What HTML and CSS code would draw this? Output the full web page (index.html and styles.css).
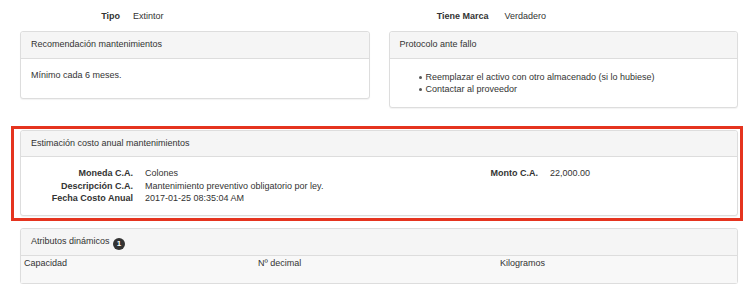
FILE: index.html
```html
<!DOCTYPE html>
<html>
<head>
    <meta charset="utf-8">
    <title>Activo - detalle</title>
    <link rel="stylesheet" href="styles.css">
</head>
<body>
<div class="page">

    <div class="columns">
        <div class="col">
            <dl class="pair">
                <dt>Tipo</dt>
                <dd>Extintor</dd>
            </dl>
            <div class="panel">
                <div class="panel-heading">Recomendación mantenimientos</div>
                <div class="panel-body">
                    <p class="text">Mínimo cada 6 meses.</p>
                </div>
            </div>
        </div>
        <div class="col">
            <dl class="pair wide">
                <dt>Tiene Marca</dt>
                <dd>Verdadero</dd>
            </dl>
            <div class="panel">
                <div class="panel-heading">Protocolo ante fallo</div>
                <div class="panel-body">
                    <ul class="bullets">
                        <li>Reemplazar el activo con otro almacenado (si lo hubiese)</li>
                        <li>Contactar al proveedor</li>
                    </ul>
                </div>
            </div>
        </div>
    </div>

    <div class="panel cost">
        <div class="panel-heading">Estimación costo anual mantenimientos</div>
        <div class="panel-body cost-body">
            <dl class="details">
                <dt>Moneda C.A.</dt>
                <dd>Colones</dd>
                <dt>Descripción C.A.</dt>
                <dd>Mantenimiento preventivo obligatorio por ley.</dd>
                <dt>Fecha Costo Anual</dt>
                <dd>2017-01-25 08:35:04 AM</dd>
            </dl>
            <dl class="details">
                <dt>Monto C.A.</dt>
                <dd>22,000.00</dd>
            </dl>
        </div>
        <div class="highlight"></div>
    </div>

    <div class="panel attrs">
        <div class="panel-heading">Atributos dinámicos <span class="badge">1</span></div>
        <div class="attr-body">
            <div class="attr-row">
                <span>Capacidad</span>
                <span>Nº decimal</span>
                <span>Kilogramos</span>
            </div>
        </div>
    </div>

</div>
</body>
</html>
```

FILE: styles.css
```css
BODY {
    margin: 0;
    background: #fff;
    color: #333;
    font-family: "Liberation Sans", Arial, Helvetica, sans-serif;
    font-size: 9px;
    line-height: 12.5px;
}

.page {
    padding: 10px 10px 0 20px;
}

.columns {
    display: grid;
    grid-template-columns: 1fr 1fr;
    column-gap: 19px;
    align-items: start;
}

.pair {
    display: grid;
    grid-template-columns: 100px 1fr;
    column-gap: 13px;
    margin: 0 0 8px;
    line-height: 13px;
}

.pair.wide {
    column-gap: 16px;
}

.pair dt, .details dt {
    font-weight: bold;
    text-align: right;
}

.pair dd, .details dd {
    margin: 0;
}

.panel {
    background: #fff;
    border: 1px solid #ddd;
    border-radius: 3px;
    box-shadow: 0 1px 1px rgba(0, 0, 0, .05);
}

.panel-heading {
    background: #f5f5f5;
    border-bottom: 1px solid #ddd;
    border-radius: 3px 3px 0 0;
    padding: 6px 10px 7px;
}

.panel-body {
    padding: 10px 10px 10px;
}

.text {
    margin: 0 0 7px;
}

.bullets {
    margin: 2px 0 1px;
    padding-left: 26px;
    list-style: none;
}

.bullets li {
    position: relative;
}

.bullets li:before {
    content: "";
    position: absolute;
    left: -7px;
    top: 5px;
    width: 3px;
    height: 3px;
    border-radius: 50%;
    background: #555;
}

.cost {
    position: relative;
    margin-top: 22px;
}

.cost-body {
    display: grid;
    grid-template-columns: 405px 1fr;
}

.details {
    display: grid;
    grid-template-columns: 102px 1fr;
    column-gap: 12px;
    margin: 0;
}

.highlight {
    position: absolute;
    left: -10px;
    right: -6px;
    top: -5px;
    bottom: -6px;
    border: 3px solid #e5341f;
}

.attrs {
    margin-top: 12px;
}

.attrs .panel-heading {
    padding: 6px 10px 5px;
}

.badge {
    display: inline-block;
    width: 12px;
    height: 12px;
    margin-left: 1px;
    border-radius: 50%;
    background: #333;
    color: #fff;
    font-size: 8px;
    font-weight: bold;
    line-height: 12px;
    text-align: center;
    vertical-align: -2px;
}

.attr-body {
    background: #f8f8f8;
    padding: 1px 0 14px;
}

.attr-row {
    display: grid;
    grid-template-columns: 234px 242px 1fr;
    padding-left: 3px;
}
```
